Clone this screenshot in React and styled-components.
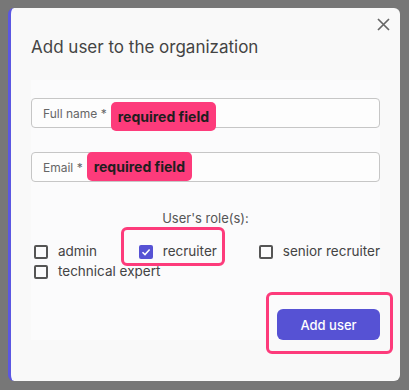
import React from 'react';
import styled, { createGlobalStyle } from 'styled-components';

const GlobalStyle = createGlobalStyle`
  html, body {
    margin: 0;
    padding: 0;
    background: #777777;
    font-family: Inter, "Noto Sans", sans-serif;
  }
`;

const Backdrop = styled.div`
  width: 409px;
  height: 390px;
  padding: 8px 9px 9px 8px;
  box-sizing: border-box;
`;

const Modal = styled.div`
  position: relative;
  height: 373px;
  box-sizing: border-box;
  background: #f9f9f9;
  border-left: 3px solid #5b57e2;
  border-radius: 6px;
  padding: 29px 20px 0 20px;
`;

const Close = styled.button`
  position: absolute;
  top: 3px;
  right: 4px;
  width: 26px;
  height: 26px;
  padding: 0;
  border: none;
  background: none;
  display: flex;
  align-items: center;
  justify-content: center;
  cursor: pointer;
`;

const Title = styled.h2`
  margin: 0 0 23px;
  font-size: 17px;
  font-weight: 400;
  color: #444;
  line-height: 20px;
`;

const Panel = styled.div`
  background: #fbfbfc;
  padding-top: 18px;
  height: 260px;
  box-sizing: border-box;
  display: flex;
  flex-direction: column;
`;

const Field = styled.div`
  height: 30px;
  box-sizing: border-box;
  border: 1px solid #c6c6c6;
  border-radius: 4px;
  background: #fdfdfd;
  display: flex;
  align-items: center;
  padding-left: 11px;
  margin-bottom: ${p => p.$mb || 0}px;
`;

const Label = styled.span`
  font-size: 12px;
  color: #666;
  margin-right: ${p => p.$gap}px;
`;

const Badge = styled.span`
  align-self: flex-start;
  margin-top: ${p => p.$top}px;
  height: 29px;
  padding: 0 7px;
  display: inline-flex;
  align-items: center;
  background: #fd3b7b;
  border-radius: 5px;
  font-size: 14px;
  font-weight: 700;
  color: #1e1e1e;
`;

const RolesTitle = styled.div`
  margin-top: 28px;
  text-align: center;
  font-size: 13px;
  color: #555;
  line-height: 16px;
`;

const Roles = styled.div`
  margin-top: 18px;
  display: flex;
  flex-wrap: wrap;
  justify-content: space-between;
  row-gap: 5px;
`;

const Role = styled.label`
  position: relative;
  display: flex;
  align-items: center;
  gap: 10px;
  padding-left: 3px;
  font-size: 13.5px;
  color: #444;
  line-height: 15px;
`;

const Box = styled.span`
  width: 14px;
  height: 14px;
  box-sizing: border-box;
  border-radius: 2px;
  border: ${p => (p.$checked ? 'none' : '2px solid #555')};
  background: ${p => (p.$checked ? '#5652d4' : 'transparent')};
  display: flex;
  align-items: center;
  justify-content: center;
`;

const Highlight = styled.span`
  position: absolute;
  border: 3px solid #fd3b7b;
  border-radius: 6px;
  top: ${p => p.$t}px;
  left: ${p => p.$l}px;
  right: ${p => p.$r}px;
  bottom: ${p => p.$b}px;
  pointer-events: none;
`;

const Footer = styled.div`
  margin-top: auto;
  display: flex;
  justify-content: flex-end;
`;

const ButtonWrap = styled.div`
  position: relative;
`;

const Button = styled.button`
  width: 103px;
  height: 31px;
  border: none;
  border-radius: 6px;
  background: #5652d4;
  color: #fff;
  font-family: Inter, "Noto Sans", sans-serif;
  font-size: 13px;
  font-weight: 500;
`;

const roles = [
  { name: 'admin' },
  { name: 'recruiter', checked: true },
  { name: 'senior recruiter' },
  { name: 'technical expert' },
];

function Check({ checked }) {
  return (
    <Box $checked={checked}>
      {checked && (
        <svg width="10" height="10" viewBox="0 0 10 10">
          <path d="M1.5 5.2 L4 7.6 L8.6 2.6" fill="none" stroke="#fff" strokeWidth="1.5" />
        </svg>
      )}
    </Box>
  );
}

export default function App() {
  return (
    <>
      <GlobalStyle />
      <Backdrop>
        <Modal>
          <Close aria-label="close">
            <svg width="13" height="13" viewBox="0 0 13 13">
              <path d="M1 1 L12 12 M12 1 L1 12" stroke="#666" strokeWidth="1.7" />
            </svg>
          </Close>
          <Title>Add user to the organization</Title>
          <Panel>
            <Field $mb={24}>
              <Label $gap={4}>Full name *</Label>
              <Badge $top={3}>required field</Badge>
            </Field>
            <Field>
              <Label $gap={4}>Email *</Label>
              <Badge $top={-1}>required field</Badge>
            </Field>
            <RolesTitle>User's role(s):</RolesTitle>
            <Roles>
              {roles.slice(0, 3).map(r => (
                <Role key={r.name}>
                  <Check checked={r.checked} />
                  {r.name}
                  {r.checked && <Highlight $t={-17} $l={-15} $r={-8} $b={-7} />}
                </Role>
              ))}
              <Role style={{ width: '100%' }}>
                <Check />
                technical expert
              </Role>
            </Roles>
            <Footer>
              <ButtonWrap>
                <Button>Add user</Button>
                <Highlight $t={-17} $l={-11} $r={-13} $b={-14} />
              </ButtonWrap>
            </Footer>
          </Panel>
        </Modal>
      </Backdrop>
    </>
  );
}
